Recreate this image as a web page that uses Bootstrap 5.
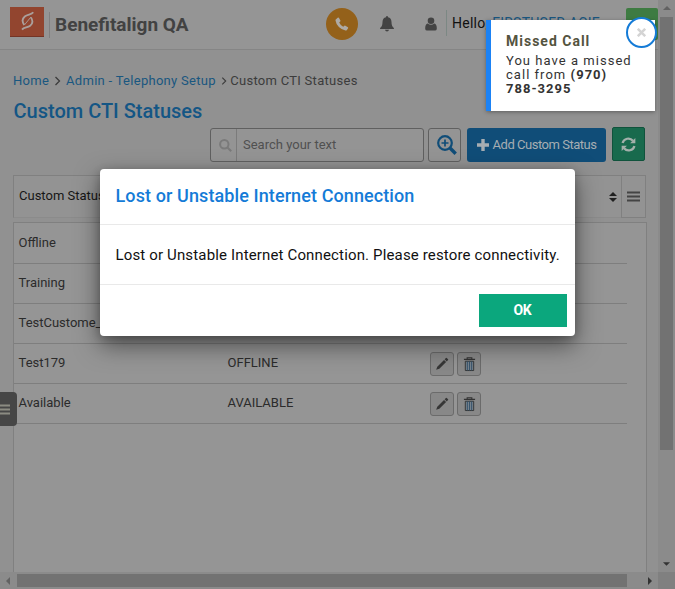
<!DOCTYPE html>
<html lang="en">
<head>
<meta charset="utf-8">
<meta name="viewport" content="width=device-width, initial-scale=1">
<title>Custom CTI Statuses</title>
<link href="https://cdn.jsdelivr.net/npm/bootstrap@5.3.0/dist/css/bootstrap.min.css" rel="stylesheet">
<style>
body{font-family:Roboto,"Liberation Sans",sans-serif;font-size:13px;line-height:20px;background:#919191;color:#2b2b2b;height:589px;overflow:hidden}
svg{display:block;flex:none}
.shell{display:grid;grid-template-columns:658px 17px;grid-template-rows:572px 17px;height:589px}
.page-area{overflow:hidden;min-width:0}
.topbar{height:50px;background:#959595;border-bottom:1px solid #858585;padding-left:10px}
.topbar>*,.tools>*{flex:none}
.logo{width:34px;height:30px;background:#92452f;border-bottom:1px solid #743425;margin-top:7px;padding-top:4px}
.brand-name{font-size:19px;line-height:25px;font-weight:700;color:#424242;border-left:1px solid #808080;margin:12px 0 0 5px;padding-left:5px;height:26px;width:277px;white-space:nowrap}
.phone-dot{width:32px;height:32px;background:#94611a;margin-top:8px}
.bell{margin:16px 0 0 22px}
.person{margin:17px 9px 0 31px}
.hello{font-size:14px;letter-spacing:.25px;border-left:1px solid #7c8884;height:26px;line-height:26px;padding-left:5px;margin-top:10px;width:180px;color:#111;white-space:nowrap}
.hello span,.crumbs a{color:#1a5780}
.go{width:32px;height:32px;background:#3e7b42;border-radius:2px;margin-top:8px}
.content-area{padding:21px 12px 0 13px}
.crumbs{font-size:13px;letter-spacing:.28px;color:#3c3c3c;gap:5px;height:20px;white-space:nowrap}
.crumbs a{text-decoration:none}
.page-title{font-size:20px;line-height:24px;font-weight:500;color:#145685;margin:8px 0 0 .5px}
.tools{margin-top:4px;padding-left:197px;height:35px}
.search-box{width:214px;height:34px;margin:1px 4px 0 0;border:1px solid #606060;border-radius:3px;background:#949494;font-size:13px;color:#505050}
.search-box .glass{width:26px;border-right:1px solid #7b7b7b}
.zoom-btn{width:33px;height:34px;margin-top:1px;border:1px solid #606060;border-radius:3px;background:#949494}
.add-btn{width:139px;height:34px;margin:1px 6px 0;border-radius:3px;background:#104d78;color:#a6adb2;font-size:13px;letter-spacing:-.48px;border:0;padding:0;white-space:nowrap;font-family:inherit}
.sync-btn{width:33px;height:34px;background:#186a4d;border:1px solid #10533c;border-radius:2px}
.grid-head{margin-top:13px;height:43px;width:633px;border:1px solid #808080;border-bottom-color:#8b8b8b;background:#939393;color:#161616;padding-left:5px}
.grid-head>span{padding-bottom:2px}
.grid-menu{width:25px;height:43px;margin:-1px -1px 0 4px;border:1px solid #808080}
.grid-body{margin-top:4px;height:352px;width:634px;border:1px solid #808080;border-bottom:0;background:#959595}
.grid-line{width:613px;height:40px;border-bottom:1px solid #7e7e7e;padding-left:4.5px}
.grid-line>span{margin-top:-1px}
.grid-line:first-child{height:41px}
.c1{width:209px}.c2{width:202.5px}
.tool{width:24px;height:24px;border:1px solid #6b6b6b;border-radius:3px;background:#888;margin:1px 3px 0 0}
.vbar,.hbar{background:#8b8b8b}
.vbar{padding:6px 2px 6px 2px}
.vthumb{width:13px;height:433px;background:#727272;margin-top:7px}
.hbar{padding:2px 6px 2px 6px}
.hthumb{width:610px;height:13px;background:#727272;margin-left:7px}
.corner{background:#808080}
.side-tab{position:absolute;left:0;top:392px;width:17px;height:34px;background:#464646;border-radius:0 4px 4px 0;padding:12px 0 0}
.dialog{position:absolute;left:100px;top:169px;width:475px;height:167px;background:#fff;border-radius:4px;box-shadow:0 9px 24px 0 rgba(0,0,0,.5),0 2px 8px rgba(0,0,0,.2);color:#111}
.dialog h2{font-size:18px;line-height:22px;font-weight:500;letter-spacing:.1px;color:#147bd7;height:56px;border-bottom:1px solid #e9e9e9;margin:0;padding:16px 15px 0 15.5px}
.dialog p{font-size:15px;line-height:22px;letter-spacing:.15px;height:60px;border-bottom:1px solid #e9e9e9;margin:0;padding:19px 0 0 15.5px;white-space:nowrap}
.ok{width:88px;height:33px;background:#0ba77d;color:#fff;font-weight:700;font-size:14px;letter-spacing:-.3px;border:0;margin:9px 8px 0 auto;padding:0 1px 1px 0}
.missed{position:absolute;left:486px;top:20px;width:169px;height:91px;background:#fff;border-left:5px solid #1b82f5;padding:13px 20px 0 15px;font-size:13px;line-height:14px;letter-spacing:1.03px;color:#333;box-shadow:0 1px 4px rgba(0,0,0,.35)}
.missed h3{font-size:14px;line-height:16px;letter-spacing:1px;font-weight:700;color:#54543f;margin:0 0 5px}
.close-dot{position:absolute;left:626px;top:17px;width:31px;height:31px;border:2px solid #147bd7;background:#fff}
</style>
<script src="https://cdn.jsdelivr.net/npm/bootstrap@5.3.0/dist/js/bootstrap.bundle.min.js"></script>
</head>
<body>
<svg class="d-none">
<symbol id="pencil" viewBox="0 0 16 16"><path d="M1.300 14.700 2.600 11 10.300 3.300l2.400 2.400L5 13.400zM11 2.600 12.500 1.100q.5-.5 1 0l1.400 1.400q.5.5 0 1L13.400 5z"/></symbol>
<symbol id="bin" viewBox="0 0 14 16"><path d="M1 2.500h12M4.500 2V.7h5V2" fill="none" stroke="#333" stroke-width="1.200"/><path d="M2.500 4.500v10h9v-10z" fill="#76828c" stroke="#333"/><path d="M4.700 4.500v10M7 4.500v10M9.300 4.500v10" stroke="#32506a"/></symbol>
</svg>
<div class="shell">
<main class="page-area">
<header class="topbar d-flex align-items-start">
<div class="logo d-flex justify-content-center"><svg width="15" height="20" viewBox="0 0 16 22" fill="none" stroke="#aaa09c" stroke-width="2"><path d="M14.300 1.500C12.500 4.200 8 3.500 5 6 2.200 8.400 2 12 4.400 15.300"/><path d="M2 20.500c2-2.700 6-1.900 8.900-4.200 3-2.400 3-6 .9-9.300"/><path d="m4.500 15.500 7.200-8.800" stroke-width="1"/></svg></div>
<div class="brand-name">Benefitalign QA</div>
<div class="phone-dot rounded-circle d-flex align-items-center justify-content-center"><svg width="14" height="14" viewBox="0 0 14 14" fill="#aeaaa5"><path d="M1 2.200 3 .6q.6-.3 1 .3l1.400 2.500q.3.600-.2 1L4.200 5.500q1.200 2.800 4 4.200l1.200-1q.5-.4 1 0l2.500 1.600q.5.400.2 1l-1.200 1.600q-.5.600-1.400.5Q6.900 13 3.900 10T.5 3.600Q.4 2.700 1 2.200z"/></svg></div>
<svg class="bell" width="14" height="16" viewBox="0 0 14 16" fill="#434343"><path d="M7 0q1 0 1 1.200Q11.400 2 11.500 6q0 4.500 2.400 6v1H.1v-1q2.400-1.500 2.400-6Q2.600 2 6 1.200 6 0 7 0M5 13.700h4Q8.700 15.500 7 15.500T5 13.700"/></svg>
<svg class="person" width="12" height="14" viewBox="0 0 12 14" fill="#434343"><circle cx="6" cy="3.800" r="3.300"/><path d="M2.700 6.500Q6 9 9.300 6.500 12 7.200 11.800 12q-.3 1.500-1.800 1.500H2Q.5 13.500.2 12 0 7.200 2.700 6.500"/></svg>
<div class="hello">Hello, <span>FIRSTUSER ACIE</span></div>
<div class="go"></div>
</header>
<section class="content-area">
<nav class="crumbs d-flex align-items-center"><a href="#">Home</a><svg width="7" height="10" viewBox="0 0 7 10" fill="none" stroke="#3c3c3c" stroke-width="1.300"><path d="m1.500 1 4 4-4 4"/></svg><a href="#">Admin - Telephony Setup</a><svg width="6" height="10" viewBox="0 0 7 10" fill="none" stroke="#3c3c3c" stroke-width="1.300"><path d="m1.500 1 4 4-4 4"/></svg><span style="margin-left:-1.500px">Custom CTI Statuses</span></nav>
<h1 class="page-title">Custom CTI Statuses</h1>
<div class="tools d-flex">
<div class="search-box d-flex align-items-center"><div class="glass h-100 d-flex align-items-center justify-content-center ps-1"><svg width="13" height="13" viewBox="0 0 13 13" fill="none" stroke="#7a7a7a" stroke-width="2"><circle cx="5.300" cy="5.300" r="4.200"/><path d="m8.500 8.500 3.700 3.700"/></svg></div><span style="padding-left:6px">Search your text</span></div>
<button class="zoom-btn p-0 d-flex align-items-center justify-content-center"><svg class="ms-1" width="20" height="20" viewBox="0 0 20 20" fill="none" stroke="#104d78" stroke-width="2.200"><circle cx="8" cy="8" r="6.800"/><path d="M8 4.500v7M4.500 8h7" stroke-width="1.700"/><path d="m13 13 5.700 5.700" stroke-width="3.400"/></svg></button>
<button class="add-btn d-flex align-items-center justify-content-center"><svg class="me-1" width="12" height="12" viewBox="0 0 12 12" stroke="#a6adb2" stroke-width="3.400"><path d="M6 0v12M0 6h12"/></svg>Add Custom Status</button>
<button class="sync-btn p-0 d-flex align-items-center justify-content-center"><svg width="15" height="15" viewBox="0 0 16 16" fill="none" stroke="#a4b0ab" stroke-width="2.400"><path d="M1.700 6.500A6.300 6.300 0 0 1 12.700 4M14.300 9.500A6.300 6.300 0 0 1 3.300 12"/><path d="M15.300 1v5.600H9.700zM.7 15V9.400h5.600z" fill="#a4b0ab" stroke="none"/></svg></button>
</div>
<div class="grid-head d-flex"><span class="my-auto">Custom Status</span><svg class="ms-auto my-auto" width="8" height="10" viewBox="0 0 8 10" fill="#202020"><path d="M0 4h8L4 0zM0 6h8l-4 4z"/></svg><div class="grid-menu d-flex align-items-center justify-content-center"><svg width="13" height="11" viewBox="0 0 13 11" stroke="#444" stroke-width="1.800"><path d="M0 1.500h13M0 5.500h13M0 9.500h13"/></svg></div></div>
<div class="grid-body">
<div class="grid-line d-flex align-items-center"><span class="c1">Offline</span></div>
<div class="grid-line d-flex align-items-center"><span class="c1">Training</span></div>
<div class="grid-line d-flex align-items-center"><span class="c1">TestCustome_</span></div>
<div class="grid-line d-flex align-items-center"><span class="c1">Test179</span><span class="c2">OFFLINE</span><button class="tool p-0 d-flex align-items-center justify-content-center"><svg width="14" height="14" fill="#363636"><use href="#pencil"/></svg></button><button class="tool p-0 d-flex align-items-center justify-content-center"><svg width="13" height="15"><use href="#bin"/></svg></button></div>
<div class="grid-line d-flex align-items-center"><span class="c1">Available</span><span class="c2">AVAILABLE</span><button class="tool p-0 d-flex align-items-center justify-content-center"><svg width="14" height="14" fill="#363636"><use href="#pencil"/></svg></button><button class="tool p-0 d-flex align-items-center justify-content-center"><svg width="13" height="15"><use href="#bin"/></svg></button></div>
</div>
</section>
</main>
<div class="vbar d-flex flex-column align-items-center"><svg width="8" height="4" viewBox="0 0 8 4" fill="#626262"><path d="M0 4h8L4 0z"/></svg><div class="vthumb"></div><svg class="mt-auto" width="7" height="4" viewBox="0 0 8 4" fill="#333"><path d="M0 0h8L4 4z"/></svg></div>
<div class="hbar d-flex align-items-center"><svg width="4" height="8" viewBox="0 0 4 8" fill="#626262"><path d="M4 0v8L0 4z"/></svg><div class="hthumb"></div><svg class="ms-auto" width="4" height="8" viewBox="0 0 4 8" fill="#333"><path d="M0 0v8l4-4z"/></svg></div>
<div class="corner"></div>
</div>
<div class="side-tab"><svg width="10" height="11" viewBox="0 0 10 11" stroke="#8b8b82" stroke-width="2.200"><path d="M0 1.500h10M0 5.500h10M0 9.500h10"/></svg></div>
<div class="dialog">
<h2>Lost or Unstable Internet Connection</h2>
<p>Lost or Unstable Internet Connection. Please restore connectivity.</p>
<button class="ok d-block">OK</button>
</div>
<div class="missed"><h3>Missed Call</h3>You have a missed call from <b>(970) 788-3295</b></div>
<div class="close-dot rounded-circle d-flex align-items-center justify-content-center"><svg width="9" height="9" viewBox="0 0 9 9" stroke="#d4d4d4" stroke-width="2.500"><path d="m.8.8 7.400 7.400M8.200.8.8 8.200"/></svg></div>
</body>
</html>
